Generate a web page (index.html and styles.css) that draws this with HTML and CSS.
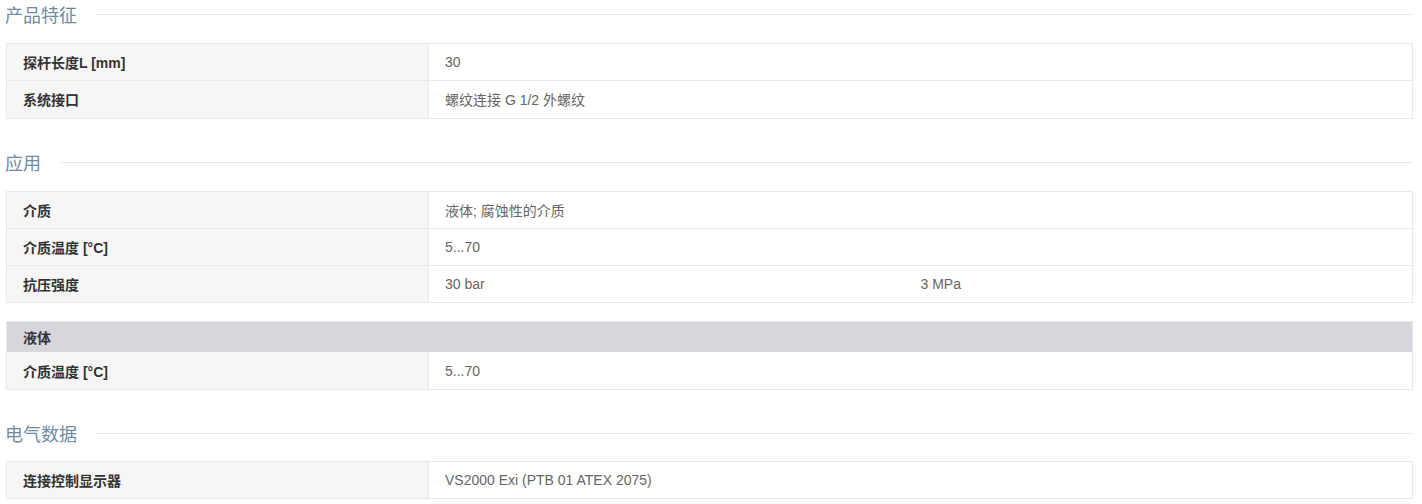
FILE: index.html
```html
<!DOCTYPE html>
<html lang="zh">
<head>
<meta charset="utf-8">
<title>产品数据</title>
<link rel="stylesheet" href="styles.css">
</head>
<body>
<div class="page">
  <div class="sec-head"><span class="sec-title">产品特征</span><span class="sec-line"></span></div>
  <div class="tbl">
    <div class="row"><div class="lbl">探杆长度L [mm]</div><div class="val">30</div></div>
    <div class="row"><div class="lbl">系统接口</div><div class="val">螺纹连接 G 1/2 外螺纹</div></div>
  </div>

  <div class="sec-head gap"><span class="sec-title">应用</span><span class="sec-line"></span></div>
  <div class="tbl">
    <div class="row"><div class="lbl">介质</div><div class="val">液体; 腐蚀性的介质</div></div>
    <div class="row"><div class="lbl">介质温度 [°C]</div><div class="val">5...70</div></div>
    <div class="row"><div class="lbl">抗压强度</div><div class="val split"><span>30 bar</span><span>3 MPa</span></div></div>
  </div>

  <div class="tbl sub">
    <div class="grp">液体</div>
    <div class="row"><div class="lbl">介质温度 [°C]</div><div class="val">5...70</div></div>
  </div>

  <div class="sec-head gap tight"><span class="sec-title">电气数据</span><span class="sec-line"></span></div>
  <div class="tbl">
    <div class="row"><div class="lbl">连接控制显示器</div><div class="val">VS2000 Exi (PTB 01 ATEX 2075)</div></div>
  </div>
</div>
</body>
</html>
```

FILE: styles.css
```css
html, body {
  margin: 0;
  padding: 0;
  background: #ffffff;
}
body {
  font-family: "Liberation Sans", Arial, "Noto Sans CJK SC", sans-serif;
  font-size: 14px;
  color: #666666;
}
.page {
  width: 1408px;
  padding: 0 0 0 5px;
}
.sec-head {
  display: flex;
  align-items: center;
  height: 29px;
  margin-bottom: 14px;
}
.sec-head.gap {
  margin-top: 29px;
}
.sec-head.tight {
  margin-bottom: 13px;
}
.sec-title {
  font-family: "Noto Sans CJK SC", "Liberation Sans", sans-serif;
  font-size: 18px;
  font-weight: 400;
  color: #6f8ca5;
  line-height: 29px;
  padding-right: 20px;
}
.sec-line {
  flex: 1;
  height: 1px;
  background: #e6e6e6;
}
.tbl {
  margin-left: 1px;
  border: 1px solid #e8e8e8;
  border-bottom: none;
}
.tbl.sub {
  margin-top: 18px;
}
.row {
  display: grid;
  grid-template-columns: 422px 1fr;
  border-bottom: 1px solid #e8e8e8;
  min-height: 36.3px;
}
.lbl {
  background: #f6f6f6;
  border-right: 1px solid #e8e8e8;
  padding: 0 16px;
  font-weight: 700;
  color: #333333;
  display: flex;
  align-items: center;
}
.val {
  padding: 0 16px;
  display: flex;
  align-items: center;
  color: #666666;
}
.val.split {
  display: grid;
  grid-template-columns: 1fr 1fr;
  align-items: center;
}
.grp {
  background: #d6d6dc;
  height: 30px;
  padding: 0 16px;
  font-weight: 700;
  color: #333333;
  display: flex;
  align-items: center;
}
```
